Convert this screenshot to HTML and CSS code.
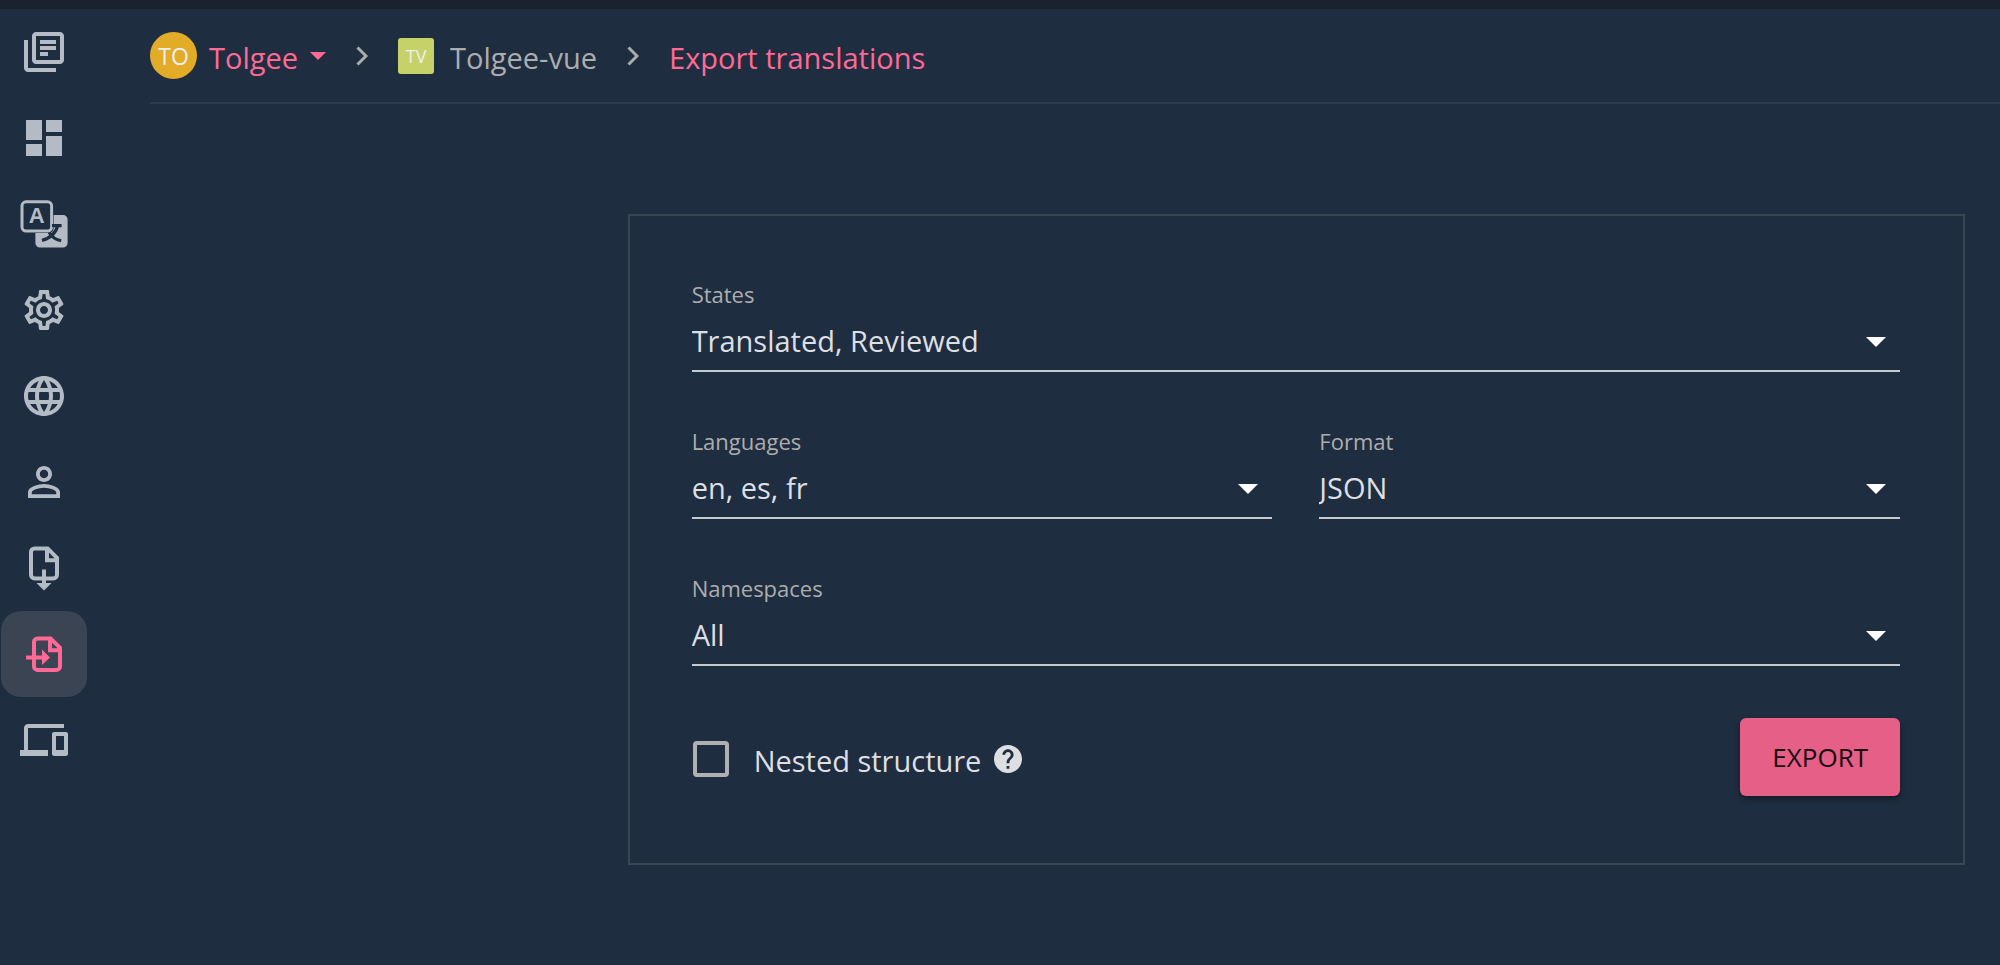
FILE: index.html
```html
<!DOCTYPE html>
<html lang="en">
<head>
<meta charset="utf-8">
<title>Export translations</title>
<link rel="stylesheet" href="styles.css">
</head>
<body>
<div class="topbar"></div>
<div class="layout">
  <nav class="sidebar" aria-label="Project menu">
    <a class="nav-item" href="#" aria-label="Projects"><svg class="icon" viewBox="0 0 24 24"><path d="M4 6H2v14c0 1.100.9 2 2 2h14v-2H4V6zm16-4H8c-1.100 0-2 .9-2 2v12c0 1.100.9 2 2 2h12c1.100 0 2-.9 2-2V4c0-1.100-.9-2-2-2zm0 14H8V4h12v12zM10 6h8v2h-8zM10 9h8v2h-8zM10 12h4v2h-4z"/></svg></a>
    <a class="nav-item" href="#" aria-label="Dashboard"><svg class="icon" viewBox="0 0 24 24"><path d="M3 13h8V3H3v10zm0 8h8v-6H3v6zm10 0h8V11h-8v10zm0-18v6h8V3h-8z"/></svg></a>
    <a class="nav-item" href="#" aria-label="Translations"><svg class="icon" viewBox="0 0 24 24"><path d="M16.800 7.500H21.500a2.300 2.300 0 0 1 2.300 2.300V21.500a2.300 2.300 0 0 1-2.300 2.300H10a2.300 2.300 0 0 1-2.300-2.300V16.500H14.500a2.300 2.300 0 0 0 2.300-2.300z"/><rect class="line line-thin" x="1" y="0.900" width="14.800" height="14.600" rx="2"/><path class="cutout" d="M16 12.800H20.800M18.800 12.800C18.300 16 15.500 19 11 20.200M14.600 16.200C15.800 18.400 18 19.800 20.600 20.400"/><text class="icon-letter" x="8.300" y="11.700">A</text></svg></a>
    <a class="nav-item" href="#" aria-label="Settings"><svg class="icon" viewBox="0 0 24 24"><path d="M19.430 12.980c.04-.32.07-.64.07-.98 0-.34-.03-.66-.07-.98l2.110-1.650c.19-.15.24-.42.12-.64l-2-3.460c-.09-.16-.26-.25-.44-.25-.06 0-.12.01-.17.03l-2.490 1c-.52-.4-1.080-.73-1.690-.98l-.38-2.650C14.460 2.180 14.250 2 14 2h-4c-.25 0-.46.18-.49.42l-.38 2.650c-.61.25-1.170.59-1.690.98l-2.490-1c-.06-.02-.12-.03-.18-.03-.17 0-.34.09-.43.25l-2 3.460c-.13.22-.07.49.12.64l2.110 1.650c-.04.32-.07.65-.07.98 0 .33.03.66.07.98l-2.110 1.650c-.19.15-.24.42-.12.64l2 3.460c.09.16.26.25.44.25.06 0 .12-.01.17-.03l2.490-1c.52.4 1.080.73 1.690.98l.38 2.650c.03.24.24.42.49.42h4c.25 0 .46-.18.49-.42l.38-2.650c.61-.25 1.170-.59 1.690-.98l2.490 1c.06.02.12.03.18.03.17 0 .34-.09.43-.25l2-3.460c.12-.22.07-.49-.12-.64l-2.110-1.650zm-1.980-1.710c.04.31.05.52.05.73 0 .21-.02.43-.05.73l-.14 1.130.89.7 1.080.84-.7 1.210-1.270-.51-1.040-.42-.9.68c-.43.32-.84.56-1.250.73l-1.060.43-.16 1.130-.2 1.350h-1.400l-.19-1.350-.16-1.130-1.060-.43c-.43-.18-.83-.41-1.230-.71l-.91-.7-1.060.43-1.270.51-.7-1.210 1.080-.84.89-.7-.14-1.130c-.03-.31-.05-.54-.05-.74s.02-.43.05-.73l.14-1.130-.89-.7-1.080-.84.7-1.210 1.270.51 1.040.42.9-.68c.43-.32.84-.56 1.250-.73l1.060-.43.16-1.130.2-1.350h1.390l.19 1.350.16 1.130 1.060.43c.43.18.83.41 1.230.71l.91.7 1.060-.43 1.270-.51.7 1.210-1.070.85-.89.7.14 1.130zM12 8c-2.210 0-4 1.790-4 4s1.790 4 4 4 4-1.790 4-4-1.790-4-4-4zm0 6c-1.100 0-2-.9-2-2s.9-2 2-2 2 .9 2 2-.9 2-2 2z"/></svg></a>
    <a class="nav-item" href="#" aria-label="Languages"><svg class="icon" viewBox="0 0 24 24"><path d="M11.990 2C6.470 2 2 6.480 2 12s4.470 10 9.990 10C17.520 22 22 17.520 22 12S17.520 2 11.990 2zm6.930 6h-2.950c-.32-1.250-.78-2.450-1.380-3.560 1.840.63 3.370 1.910 4.330 3.560zM12 4.040c.83 1.200 1.480 2.530 1.910 3.960h-3.820c.43-1.430 1.080-2.760 1.910-3.960zM4.260 14C4.100 13.360 4 12.690 4 12s.1-1.360.26-2h3.380c-.08.66-.14 1.320-.14 2 0 .68.06 1.340.14 2H4.260zm.82 2h2.950c.32 1.250.78 2.450 1.380 3.560-1.840-.63-3.370-1.900-4.330-3.560zm2.950-8H5.080c.96-1.660 2.490-2.930 4.330-3.560C8.810 5.550 8.350 6.750 8.030 8zM12 19.960c-.83-1.200-1.480-2.530-1.910-3.960h3.820c-.43 1.430-1.080 2.760-1.910 3.960zM14.340 14H9.660c-.09-.66-.16-1.320-.16-2 0-.68.07-1.350.16-2h4.680c.09.65.16 1.320.16 2 0 .68-.07 1.340-.16 2zm.25 5.560c.6-1.110 1.060-2.310 1.380-3.560h2.950c-.96 1.650-2.490 2.930-4.330 3.560zM16.360 14c.08-.66.14-1.320.14-2 0-.68-.06-1.340-.14-2h3.380c.16.64.26 1.310.26 2s-.1 1.360-.26 2h-3.380z"/></svg></a>
    <a class="nav-item" href="#" aria-label="Members"><svg class="icon" viewBox="0 0 24 24"><path d="M12 5.900c1.160 0 2.100.94 2.100 2.100s-.94 2.100-2.100 2.100S9.900 9.160 9.900 8s.94-2.100 2.100-2.100m0 9c2.970 0 6.100 1.460 6.100 2.100v1.100H5.900V17c0-.64 3.130-2.100 6.100-2.100M12 4C9.790 4 8 5.790 8 8s1.790 4 4 4 4-1.790 4-4-1.790-4-4-4zm0 9c-2.670 0-8 1.340-8 4v3h16v-3c0-2.660-5.330-4-8-4z"/></svg></a>
    <a class="nav-item" href="#" aria-label="Import"><svg class="icon" viewBox="0 0 24 24"><path class="line" d="M13.800 2.200H7.300A1.800 1.800 0 0 0 5.500 4V15.400A1.800 1.800 0 0 0 7.300 17.200H16.700A1.800 1.800 0 0 0 18.500 15.400V6.900zM12 12.700V20M13.500 2.700V8.100H18.200"/><path d="M8.200 19.500H15.800L12 23.200z"/></svg></a>
    <a class="nav-item nav-item-active" href="#" aria-label="Export" aria-current="page"><svg class="icon" viewBox="0 0 24 24"><path class="line" d="M15.300 4.200H8.800A1.800 1.800 0 0 0 7 6V18.200A1.800 1.800 0 0 0 8.800 20H18.200A1.800 1.800 0 0 0 20 18.200V8.900zM3 13.700H12M15 4.700V10.100H19.700"/><path d="M11 9.800V17.500L15 13.700z"/></svg></a>
    <a class="nav-item" href="#" aria-label="Developer"><svg class="icon" viewBox="0 0 24 24"><path d="M4 6h18V4H4c-1.100 0-2 .9-2 2v11H0v3h14v-3H4V6zm19 2h-6c-.55 0-1 .45-1 1v10c0 .55.45 1 1 1h6c.55 0 1-.45 1-1V9c0-.55-.45-1-1-1zm-1 9h-4v-7h4v7z"/></svg></a>
  </nav>
  <main class="main">
    <header class="breadcrumbs">
      <a class="crumb crumb-org" href="#"><span class="avatar avatar-round">TO</span><span class="crumb-text">Tolgee</span><svg class="org-caret" viewBox="0 0 16 8"><path d="M0 0h16L8 8z"/></svg></a>
      <svg class="chevron" viewBox="0 0 12 20"><path d="M1.500 1.500L10 10l-8.500 8.500"/></svg>
      <a class="crumb crumb-project" href="#"><span class="avatar avatar-square">TV</span><span class="crumb-text">Tolgee-vue</span></a>
      <svg class="chevron" viewBox="0 0 12 20"><path d="M1.500 1.500L10 10l-8.500 8.500"/></svg>
      <a class="crumb crumb-current" href="#" aria-current="page"><span class="crumb-text">Export translations</span></a>
    </header>
    <div class="content">
      <form class="card">
        <div class="field field-wide">
          <label class="label" for="states">States</label>
          <div class="control"><select class="select" id="states"><option>Translated, Reviewed</option></select><svg class="caret" viewBox="0 0 20 10"><path d="M0 0h20L10 10z"/></svg></div>
        </div>
        <div class="field">
          <label class="label" for="languages">Languages</label>
          <div class="control"><select class="select" id="languages"><option>en, es, fr</option></select><svg class="caret" viewBox="0 0 20 10"><path d="M0 0h20L10 10z"/></svg></div>
        </div>
        <div class="field">
          <label class="label" for="format">Format</label>
          <div class="control"><select class="select" id="format"><option>JSON</option></select><svg class="caret" viewBox="0 0 20 10"><path d="M0 0h20L10 10z"/></svg></div>
        </div>
        <div class="field field-wide">
          <label class="label" for="namespaces">Namespaces</label>
          <div class="control"><select class="select" id="namespaces"><option>All</option></select><svg class="caret" viewBox="0 0 20 10"><path d="M0 0h20L10 10z"/></svg></div>
        </div>
        <div class="actions">
          <div class="option">
            <input class="checkbox" type="checkbox" id="nested">
            <label class="option-label" for="nested">Nested structure</label>
            <svg class="help" viewBox="2 2 20 20"><path d="M12 2C6.480 2 2 6.480 2 12s4.480 10 10 10 10-4.480 10-10S17.520 2 12 2zm1 17h-2v-2h2v2zm2.070-7.750l-.9.920C13.450 12.900 13 13.500 13 15h-2v-.5c0-1.100.45-2.100 1.170-2.830l1.240-1.260c.37-.36.59-.86.59-1.410 0-1.100-.9-2-2-2s-2 .9-2 2H8c0-2.210 1.790-4 4-4s4 1.790 4 4c0 .88-.36 1.680-.93 2.250z"/></svg>
          </div>
          <button class="export" type="submit">EXPORT</button>
        </div>
      </form>
    </div>
  </main>
</div>
</body>
</html>
```
FILE: styles.css
```css
* {
  box-sizing: border-box;
}

body {
  margin: 0;
  min-height: 100vh;
  background: #1f2d40;
  color: #dddfe2;
  font-family: "Open Sans", "Noto Sans", sans-serif;
  font-size: 29px;
}

a {
  color: inherit;
  text-decoration: none;
}

svg {
  display: block;
  flex: none;
  fill: currentColor;
}

.topbar {
  height: 9px;
  background: #1a2230;
}

.layout {
  display: flex;
}

.sidebar {
  display: flex;
  flex: none;
  flex-direction: column;
  width: 88px;
  padding-left: 1px;
  color: #b3bbc5;
}

.nav-item {
  display: flex;
  align-items: center;
  justify-content: center;
  width: 86px;
  height: 86px;
  border-radius: 20px;
}

.nav-item-active {
  background: #3a4453;
  color: #ff6995;
}

.icon {
  width: 48px;
  height: 48px;
}

.line {
  fill: none;
  stroke: currentColor;
  stroke-width: 2;
}

.line-thin {
  stroke-width: 1.5;
}

.cutout {
  fill: none;
  stroke: #1f2d40;
  stroke-width: 1.6;
}

.icon-letter {
  font-family: "Liberation Sans", sans-serif;
  font-size: 11px;
  font-weight: bold;
  text-anchor: middle;
}

.main {
  flex: 1;
  min-width: 0;
  padding-left: 62px;
}

.breadcrumbs {
  display: flex;
  align-items: center;
  gap: 30px;
  height: 95px;
  border-bottom: 2px solid #2d3b4e;
}

.crumb {
  display: flex;
  align-items: center;
  line-height: 40px;
}

.crumb-text {
  padding-top: 5px;
}

.crumb-org {
  gap: 12px;
  color: #ff6995;
}

.crumb-project {
  gap: 16px;
  color: #adadad;
}

.crumb-current {
  color: #ff6995;
}

.avatar {
  display: flex;
  align-items: center;
  justify-content: center;
  color: #eeeeee;
}

.avatar-round {
  width: 47px;
  height: 47px;
  border-radius: 50%;
  background: #e2ac29;
  font-size: 23px;
}

.avatar-square {
  width: 36px;
  height: 36px;
  border-radius: 3px;
  background: #c7d169;
  font-size: 18px;
}

.org-caret {
  width: 16px;
  height: 8px;
}

.chevron {
  width: 12px;
  height: 20px;
  fill: none;
  stroke: #adadad;
  stroke-width: 3;
}

.content {
  display: grid;
  grid-template-columns: 5fr 14fr;
  padding: 110px 35px 0 0;
}

.card {
  display: grid;
  grid-column: 2;
  grid-template-columns: 1fr 1fr;
  gap: 52px 47px;
  padding: 61px 63px 67px 62px;
  border: 2px solid #374554;
}

.field {
  display: flex;
  flex-direction: column;
  height: 95px;
}

.field-wide,
.actions {
  grid-column: 1 / -1;
}

.label {
  color: #adadad;
  font-size: 22px;
  line-height: 34px;
}

.control {
  position: relative;
  display: flex;
  flex: 1;
  border-bottom: 2px solid #c5c9d0;
}

.select {
  flex: 1;
  margin: 0 0 0 -4px;
  padding: 0 48px 0 4px;
  border: 0;
  border-radius: 0;
  appearance: none;
  background: transparent;
  color: inherit;
  font: inherit;
}

.caret {
  position: absolute;
  top: 26px;
  right: 14px;
  width: 20px;
  height: 10px;
  fill: #ffffff;
  pointer-events: none;
}

.actions {
  display: flex;
  align-items: center;
  justify-content: space-between;
}

.option {
  display: flex;
  align-items: center;
  padding-top: 4px;
}

.checkbox {
  width: 36px;
  height: 36px;
  margin: 0 25px 0 1px;
  border: 4px solid #b0b0b0;
  border-radius: 4px;
  appearance: none;
}

.checkbox:checked {
  background: #ff6995;
}

.option-label {
  padding-top: 4px;
  line-height: 40px;
}

.help {
  width: 28px;
  height: 28px;
  margin-left: 13px;
}

.export {
  height: 78px;
  padding: 0 32px;
  border: 0;
  border-radius: 6px;
  background: #e65f87;
  box-shadow: 0 3px 6px rgba(0, 0, 0, 0.4);
  color: #170a0e;
  font: inherit;
  font-size: 26px;
}
```
